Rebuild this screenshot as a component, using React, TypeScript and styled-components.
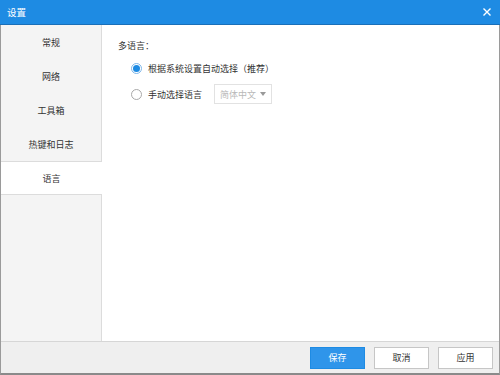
import React, { useState } from "react";
import styled, { createGlobalStyle } from "styled-components";

const Global = createGlobalStyle`
  html, body { margin: 0; padding: 0; background: #fff; }
  body { font-family: "Noto Sans CJK SC", "Noto Sans", sans-serif; font-size: 9px; color: #333; }
`;

const Window = styled.div`
  width: 500px;
  height: 375px;
  display: flex;
  flex-direction: column;
  box-sizing: border-box;
  border-left: 1px solid #9a9a9a;
  border-right: 1px solid #9a9a9a;
  border-bottom: 2px solid #8a8a8a;
  background: #fff;
`;

const TitleBar = styled.div`
  height: 24px;
  flex: none;
  background: #1e8be3;
  border-bottom: 1px solid #1a6fb8;
  margin: 0 -1px;
  display: flex;
  align-items: center;
  justify-content: space-between;
  padding: 0 8px 0 7px;
  color: #fff;
  font-size: 9.5px;
`;

const Close = styled.span`
  display: flex;
  width: 10px;
  height: 10px;
`;

const Body = styled.div`
  flex: 1;
  display: flex;
  min-height: 0;
`;

const Sidebar = styled.div`
  width: 100px;
  flex: none;
  background: #f4f4f4;
  border-right: 1px solid #dcdcdc;
  display: flex;
  flex-direction: column;
`;

const NavItem = styled.div<{ $active?: boolean }>`
  height: 34px;
  flex: none;
  box-sizing: border-box;
  display: flex;
  align-items: center;
  justify-content: center;
  color: #333;
  background: ${(p) => (p.$active ? "#fff" : "transparent")};
  border-top: 1px solid ${(p) => (p.$active ? "#dcdcdc" : "transparent")};
  border-bottom: 1px solid ${(p) => (p.$active ? "#dcdcdc" : "transparent")};
  margin-right: ${(p) => (p.$active ? "-1px" : "0")};
`;

const Content = styled.div`
  flex: 1;
  padding: 10px 16px;
  display: flex;
  flex-direction: column;
`;

const Heading = styled.div`
  height: 20px;
  display: flex;
  align-items: center;
  color: #333;
`;

const Options = styled.div`
  display: flex;
  flex-direction: column;
  padding-left: 13px;
  margin-top: 0;
`;

const OptionRow = styled.label`
  height: 26px;
  display: flex;
  align-items: center;
  gap: 6px;
  color: #333;
  white-space: nowrap;
`;

const Radio = styled.span<{ $checked?: boolean }>`
  width: 11px;
  height: 11px;
  flex: none;
  box-sizing: border-box;
  border-radius: 50%;
  border: 1px solid ${(p) => (p.$checked ? "#7eb7ea" : "#a9a9a9")};
  background: #fff;
  display: flex;
  align-items: center;
  justify-content: center;
  &::after {
    content: "";
    width: 7px;
    height: 7px;
    border-radius: 50%;
    background: ${(p) => (p.$checked ? "#1e8be3" : "transparent")};
  }
`;

const Select = styled.div`
  margin-left: 6px;
  width: 58px;
  height: 20px;
  flex: none;
  box-sizing: border-box;
  border: 1px solid #e2e2e2;
  display: flex;
  align-items: center;
  justify-content: space-between;
  padding: 0 5px 0 5px;
  color: #b8b8b8;
`;

const Caret = styled.span`
  width: 0;
  height: 0;
  border-left: 3.5px solid transparent;
  border-right: 3.5px solid transparent;
  border-top: 4px solid #999;
`;

const Footer = styled.div`
  height: 31px;
  flex: none;
  background: #efefef;
  border-top: 1px solid #d6d6d6;
  display: flex;
  align-items: center;
  justify-content: flex-end;
  gap: 9px;
  padding-right: 6px;
`;

const Button = styled.button<{ $primary?: boolean }>`
  width: 55px;
  height: 22px;
  box-sizing: border-box;
  font-family: inherit;
  font-size: 9px;
  padding: 0;
  border: 1px solid ${(p) => (p.$primary ? "#1e8be3" : "#c6c6c6")};
  background: ${(p) => (p.$primary ? "#2f95ea" : "#fff")};
  color: ${(p) => (p.$primary ? "#fff" : "#333")};
  cursor: pointer;
`;

const navItems = ["常规", "网络", "工具箱", "热键和日志", "语言"];

export default function App() {
  const [active] = useState(4);
  return (
    <>
      <Global />
      <Window>
        <TitleBar>
          <span>设置</span>
          <Close>
            <svg width="10" height="10" viewBox="0 0 10 10">
              <path d="M1.5 1.5 L8.5 8.5 M8.5 1.5 L1.5 8.5" stroke="#fff" strokeWidth="1.4" />
            </svg>
          </Close>
        </TitleBar>
        <Body>
          <Sidebar>
            {navItems.map((n, i) => (
              <NavItem key={n} $active={i === active}>
                {n}
              </NavItem>
            ))}
          </Sidebar>
          <Content>
            <Heading>多语言：</Heading>
            <Options>
              <OptionRow>
                <Radio $checked />
                根据系统设置自动选择（推荐）
              </OptionRow>
              <OptionRow>
                <Radio />
                手动选择语言
                <Select>
                  简体中文
                  <Caret />
                </Select>
              </OptionRow>
            </Options>
          </Content>
        </Body>
        <Footer>
          <Button $primary>保存</Button>
          <Button>取消</Button>
          <Button>应用</Button>
        </Footer>
      </Window>
    </>
  );
}
